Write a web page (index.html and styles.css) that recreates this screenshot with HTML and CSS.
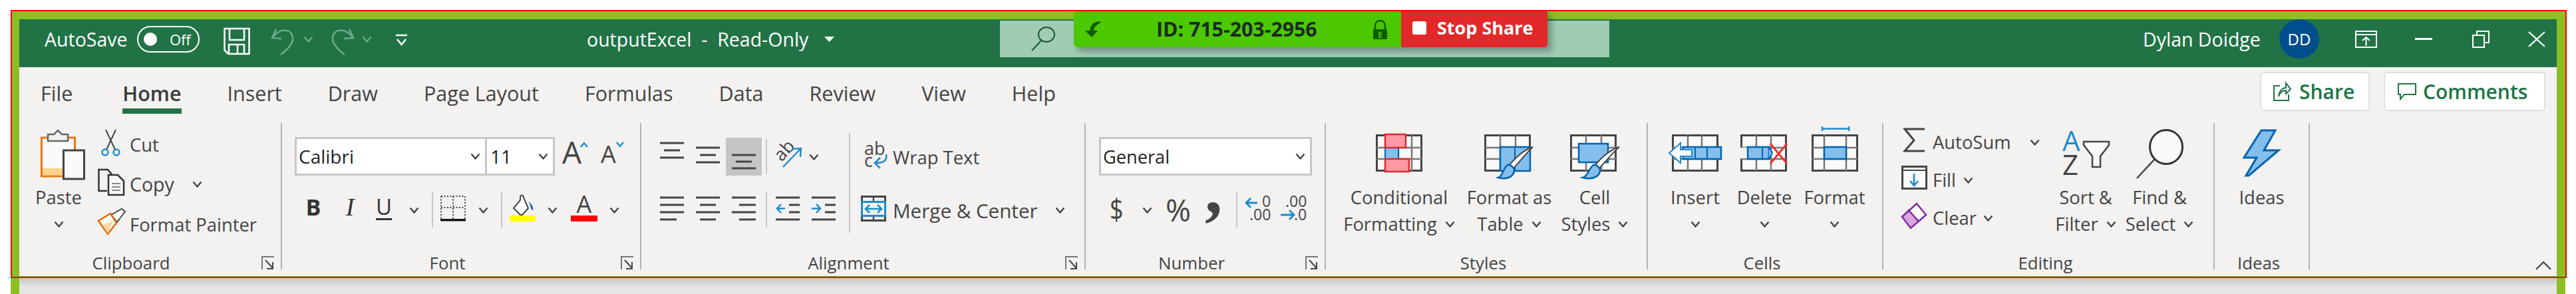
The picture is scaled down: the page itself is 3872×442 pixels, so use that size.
FILE: index.html
```html
<!DOCTYPE html>
<html lang="en">
<head>
<meta charset="utf-8">
<title>outputExcel - Read-Only</title>
<link rel="stylesheet" href="styles.css">
</head>
<body>
<svg class="defs" aria-hidden="true">
  <symbol id="chev" viewBox="0 0 15 10"><polyline points="1.5,1.5 7.5,8.5 13.5,1.5" fill="none" stroke="currentColor" stroke-width="2.4"/></symbol>
  <symbol id="launch" viewBox="0 0 20 20"><path d="M1 20V1H19" fill="none" stroke="#777" stroke-width="2"/><path d="M6 6L17 18M17 9V19H8" fill="none" stroke="#444" stroke-width="2"/></symbol>
</svg>
<div class="frame">
  <div class="meeting">
    <div class="meeting-id">
      <svg class="m-logo" viewBox="0 0 25 25"><path d="M25 2C17 0 9 3 7 15H0L10 25L19 15H13C13 10 17 6 25 2Z" fill="#0f5c00"/></svg>
      <span class="m-text">ID: 715-203-2956</span>
      <svg class="m-lock" viewBox="0 0 23 29"><path d="M4 15V9C4 4 7 1 11.500 1S19 4 19 9V15" fill="none" stroke="#0f5c00" stroke-width="2.500"/><rect x="1" y="14" width="21" height="15" rx="1.500" fill="#0f5c00"/><text x="11.500" y="27" class="m-e">E</text></svg>
    </div>
    <div class="meeting-stop">
      <span class="m-square"></span>
      <span class="m-stop">Stop Share</span>
    </div>
  </div>

  <header class="titlebar">
    <span class="autosave">AutoSave</span>
    <span class="toggle"><span class="knob"></span><span class="off">Off</span></span>
    <svg class="tb save" viewBox="0 0 40 59"><path d="M1.500 14H38.500V52H7L1.500 46.500Z M9 14V31H31V14 M8 52V38H31V52 M21 38V52" fill="none" stroke="#fff" stroke-width="2.500"/></svg>
    <svg class="tb undo" viewBox="0 0 36 59"><path d="M8 15L2 28L16 29M3 27C12 13 34 12 33 31C32 39 20 50 15 53" fill="none" stroke="#6dab8a" stroke-width="2.500"/></svg>
    <svg class="chev dim m13"><use href="#chev"/></svg>
    <svg class="tb redo" viewBox="0 0 37 59"><path d="M29 15L35 28L21 29M34 27C25 13 3 12 4 31C5 39 17 50 22 53" fill="none" stroke="#6dab8a" stroke-width="2.500"/></svg>
    <svg class="chev dim m11"><use href="#chev"/></svg>
    <svg class="tb custom" viewBox="0 0 19 59"><path d="M1 24H18" stroke="#fff" stroke-width="2.500"/><path d="M3 30L9.500 38L16 30" fill="none" stroke="#fff" stroke-width="2.500"/></svg>
    <div class="doc">
      <span class="doc-name">outputExcel  -  Read-Only</span>
      <svg class="doc-arrow" viewBox="0 0 15 8"><path d="M0 0H15L7.500 8Z" fill="#fff"/></svg>
    </div>
    <div class="search">
      <svg class="search-ico" viewBox="0 0 36 36"><ellipse cx="23" cy="12" rx="12" ry="11" fill="none" stroke="#17553a" stroke-width="2"/><path d="M15 21L1 36" stroke="#17553a" stroke-width="2"/></svg>
    </div>
    <span class="user">Dylan Doidge</span>
    <span class="avatar">DD</span>
    <svg class="tb win1" viewBox="0 0 33 26"><rect x="1" y="1" width="31" height="24" fill="none" stroke="#fff" stroke-width="2"/><path d="M1 6H32M16.500 23V10M11 15L16.500 10L22 15" fill="none" stroke="#fff" stroke-width="2"/></svg>
    <span class="win-min"></span>
    <svg class="tb win3" viewBox="0 0 26 26"><rect x="1" y="7" width="17" height="18" fill="none" stroke="#fff" stroke-width="2"/><path d="M7 7V1H25V18H18" fill="none" stroke="#fff" stroke-width="2"/></svg>
    <svg class="tb win4" viewBox="0 0 26 24"><path d="M1 1L25 23M25 1L1 23" stroke="#fff" stroke-width="2.200"/></svg>
  </header>

  <nav class="tabs">
    <span class="tab tab-file">File</span>
    <span class="tab tab-on">Home</span>
    <span class="tab">Insert</span>
    <span class="tab">Draw</span>
    <span class="tab">Page Layout</span>
    <span class="tab">Formulas</span>
    <span class="tab">Data</span>
    <span class="tab">Review</span>
    <span class="tab">View</span>
    <span class="tab">Help</span>
    <div class="actions">
      <span class="action act-share">
        <svg class="act-ico" viewBox="0 0 28 29"><path d="M11 6H2V28H24V19M9 22C10 13 15 9 20 9V2L27 11L20 18V13C15 13 11 16 9 22Z" fill="none" stroke="#217346" stroke-width="2"/></svg>
        <span>Share</span>
      </span>
      <span class="action act-comments">
        <svg class="act-ico" viewBox="0 0 28 25"><path d="M1 1H27V17H10L4 24V17H1Z" fill="none" stroke="#217346" stroke-width="2"/></svg>
        <span>Comments</span>
      </span>
    </div>
  </nav>

  <section class="ribbon">
    <div class="group g-clip">
      <div class="gbody">
        <div class="big b-paste">
          <svg class="bigico w80" viewBox="0 0 80 92">
            <rect x="14.500" y="22" width="50" height="58" fill="#fafafa" stroke="#e8790a" stroke-width="3"/>
            <rect x="16" y="68" width="30" height="10" fill="#fdd58a"/>
            <path d="M24 27V17H33L39 11L45 17H54V27Z" fill="#f3f2f1" stroke="#666" stroke-width="2.500"/>
            <rect x="47.500" y="41" width="31" height="43" fill="#fafafa" stroke="#444" stroke-width="3"/>
          </svg>
          <span class="bline">Paste</span>
          <span class="bline"><svg class="chev"><use href="#chev"/></svg></span>
        </div>
        <div class="smalls">
          <div class="srow">
            <svg class="sico" viewBox="0 0 48 60"><path d="M12 8L26 38M27 8L13 38" stroke="#444" stroke-width="2"/><circle cx="11" cy="42" r="4.500" fill="none" stroke="#1e8bcd" stroke-width="2.500"/><circle cx="28" cy="42" r="4.500" fill="none" stroke="#1e8bcd" stroke-width="2.500"/></svg>
            <span>Cut</span>
          </div>
          <div class="srow">
            <svg class="sico" viewBox="0 0 48 60"><path d="M14 40H1.500V8H15L21 15" fill="none" stroke="#333" stroke-width="2.500"/><path d="M16 16H30L39 25V46H16Z" fill="#fafafa" stroke="#333" stroke-width="2.500"/><path d="M21 29H34M21 34H34M21 39H34" stroke="#888" stroke-width="2"/></svg>
            <span class="copy-text">Copy</span>
            <svg class="chev m27"><use href="#chev"/></svg>
          </div>
          <div class="srow">
            <svg class="sico" viewBox="0 0 48 60"><path d="M20 16L36 7L41 11L29 27Z" fill="#fff" stroke="#444" stroke-width="2"/><path d="M1 25L19 14L28 28L15 45Z" fill="#fff" stroke="#e06c00" stroke-width="2.500"/><path d="M7 31L23 25L15 44Z" fill="#fcd9a8"/></svg>
            <span>Format Painter</span>
          </div>
        </div>
      </div>
      <div class="glabel"><span class="gname">Clipboard</span><svg class="launch l28"><use href="#launch"/></svg></div>
    </div>

    <div class="group g-font">
      <div class="gbody col">
        <div class="fontrow">
          <span class="select s-font"><span>Calibri</span><svg class="chev"><use href="#chev"/></svg></span>
          <span class="select s-size"><span>11</span><svg class="chev"><use href="#chev"/></svg></span>
          <span class="grow">A<svg class="caret" viewBox="0 0 12 9"><path d="M1 8L6 2L11 8" fill="none" stroke="#1e8bcd" stroke-width="2.400"/></svg></span>
          <span class="shrink">A<svg class="caret" viewBox="0 0 12 9"><path d="M1 1L6 7L11 1" fill="none" stroke="#1e8bcd" stroke-width="2.400"/></svg></span>
        </div>
        <div class="tools">
          <span class="fmt fmt-b">B</span>
          <span class="fmt fmt-i">I</span>
          <span class="fmt fmt-u">U</span>
          <svg class="chev m14"><use href="#chev"/></svg>
          <span class="vdiv m19"></span>
          <svg class="tool w38 m11" viewBox="0 0 38 53"><path d="M1 6H37M1 6V40M37 6V40M19 6V40M1 23H37" fill="none" stroke="#444" stroke-width="2" stroke-dasharray="2 2.500"/><rect y="40" width="38" height="3.500" fill="#111"/></svg>
          <svg class="chev m19"><use href="#chev"/></svg>
          <span class="vdiv m19"></span>
          <svg class="tool w39 m11" viewBox="0 0 39 53"><path d="M6 24L16 12V7C17 3 20 4 21 8L28 24L19 34H16Z" fill="#fff" stroke="#444" stroke-width="2"/><path d="M29 14C33 18 36 22 35 27C33 28 32 24 29 14Z" fill="#0f6cbd"/><rect y="35" width="39" height="9" fill="#ffff00"/></svg>
          <svg class="chev m18"><use href="#chev"/></svg>
          <span class="colora m20">A<span class="colorbar"></span></span>
          <svg class="chev m18"><use href="#chev"/></svg>
        </div>
      </div>
      <div class="glabel"><span class="gname">Font</span><svg class="launch l12"><use href="#launch"/></svg></div>
    </div>

    <div class="group g-align">
      <div class="gbody">
        <div class="al-left">
          <div class="al-row1">
            <svg class="tool w36" viewBox="0 0 36 57"><path d="M0 8H36M6 19H30M0 30H36" stroke="#444" stroke-width="2.800"/></svg>
            <svg class="tool w36 m18" viewBox="0 0 36 57"><path d="M0 15H36M6 26H30M0 37H36" stroke="#444" stroke-width="2.800"/></svg>
            <span class="al-sel m9"><svg class="tool w36" viewBox="0 0 36 57"><path d="M0 26H36M6 36H30M0 46H36" stroke="#444" stroke-width="2.800"/></svg></span>
            <span class="vdiv m6"></span>
            <svg class="tool w40 m11" viewBox="0 0 40 57"><text class="ab-rot" transform="translate(11 37) rotate(-48)">ab</text><path d="M13 44L39 17M27 17L40 16L39 29" fill="none" stroke="#1e8bcd" stroke-width="2.500"/></svg>
            <svg class="chev m12"><use href="#chev"/></svg>
          </div>
          <div class="al-row2">
            <svg class="tool w36" viewBox="0 0 36 53"><path d="M0 8H36M0 19H36M0 30H36M0 41H25" stroke="#444" stroke-width="2.800"/></svg>
            <svg class="tool w36 m18" viewBox="0 0 36 53"><path d="M0 8H36M6 19H30M0 30H36M6 41H30" stroke="#444" stroke-width="2.800"/></svg>
            <svg class="tool w36 m18" viewBox="0 0 36 53"><path d="M0 8H36M11 19H36M0 30H36M11 41H36" stroke="#444" stroke-width="2.800"/></svg>
            <span class="vdiv m15"></span>
            <svg class="tool w36 m13" viewBox="0 0 36 53"><path d="M0 8H36M20 19H36M20 30H36M0 41H36" stroke="#444" stroke-width="2.800"/><path d="M14 24.500H2M8 18L2 24.500L8 31" fill="none" stroke="#1e8bcd" stroke-width="2.500"/></svg>
            <svg class="tool w36 m18" viewBox="0 0 36 53"><path d="M0 8H36M20 19H36M20 30H36M0 41H36" stroke="#444" stroke-width="2.800"/><path d="M0 24.500H13M7 18L13 24.500L7 31" fill="none" stroke="#1e8bcd" stroke-width="2.500"/></svg>
          </div>
        </div>
        <span class="bigdiv"></span>
        <div class="al-right">
          <div class="wrow">
            <svg class="wico" viewBox="0 0 48 60"><text class="ab" x="5" y="27">ab</text><text class="ab" x="5" y="45">c</text><path d="M38 26C40 37 32 39 22 39M29 31L21 39L29 47" fill="none" stroke="#1e8bcd" stroke-width="2.500"/></svg>
            <span>Wrap Text</span>
          </div>
          <div class="wrow">
            <svg class="wico" viewBox="0 0 48 60"><rect x="1.500" y="9.500" width="35" height="36" fill="none" stroke="#444" stroke-width="3"/><path d="M19 9V45" stroke="#444" stroke-width="2.500"/><rect x="1.500" y="17.500" width="35" height="21" fill="#f3f2f1" stroke="#1e8bcd" stroke-width="3"/><path d="M8 28H30M13 22L7 28L13 34M25 22L31 28L25 34" fill="none" stroke="#1e8bcd" stroke-width="2.500"/></svg>
            <span class="merge-text">Merge &amp; Center</span>
            <svg class="chev m26"><use href="#chev"/></svg>
          </div>
        </div>
      </div>
      <div class="glabel"><span class="gname">Alignment</span><svg class="launch l14"><use href="#launch"/></svg></div>
    </div>

    <div class="group g-num">
      <div class="gbody col">
        <div class="fontrow">
          <span class="select s-num"><span>General</span><svg class="chev"><use href="#chev"/></svg></span>
        </div>
        <div class="tools">
          <span class="nsym n-dollar">$</span>
          <svg class="chev m30"><use href="#chev"/></svg>
          <span class="nsym n-pct m20">%</span>
          <svg class="tool w20 m26" viewBox="0 0 20 53"><text class="comma" x="-5" y="31">,</text></svg>
          <span class="vdiv m22"></span>
          <svg class="tool w39 m11" viewBox="0 0 39 53"><text class="dec" x="26" y="22">0</text><text class="dec" x="7" y="42">.00</text><path d="M19 16H2M9 9L2 16L9 23" fill="none" stroke="#1e8bcd" stroke-width="2.800"/></svg>
          <svg class="tool w39 m14" viewBox="0 0 39 53"><text class="dec" x="8" y="22">.00</text><text class="dec" x="21" y="42">.0</text><path d="M1 34H21M14 27L21 34L14 41" fill="none" stroke="#1e8bcd" stroke-width="2.800"/></svg>
        </div>
      </div>
      <div class="glabel"><span class="gname">Number</span><svg class="launch l12"><use href="#launch"/></svg></div>
    </div>

    <div class="group g-styles">
      <div class="gbody">
        <div class="big b-cf">
          <svg class="bigico w70" viewBox="0 0 70 92">
            <rect x="1.500" y="18.500" width="67" height="53" fill="#fafafa" stroke="#444" stroke-width="3"/>
            <path d="M1 37H69M1 54H69M34 18V72M54 18V72" stroke="#777" stroke-width="2.500"/>
            <rect x="14" y="37" width="20" height="17" fill="#83beec" stroke="#0063b1" stroke-width="2"/>
            <rect x="14" y="17" width="31" height="20" fill="#ff99a4" stroke="#d92b2b" stroke-width="2.500"/>
            <rect x="14" y="54" width="36" height="19" fill="#ff99a4" stroke="#d92b2b" stroke-width="2.500"/>
          </svg>
          <span class="bline">Conditional</span>
          <span class="bline">Formatting<svg class="chev m12"><use href="#chev"/></svg></span>
        </div>
        <div class="big b-fat">
          <svg class="bigico w75" viewBox="0 0 75 92">
            <rect x="1.500" y="18.500" width="67" height="53" fill="#fafafa" stroke="#444" stroke-width="3"/>
            <path d="M1 37H69M1 54H69M24 18V72M47 18V72" stroke="#777" stroke-width="2.500"/>
            <rect x="24" y="36" width="45" height="36" fill="#83beec" stroke="#0063b1" stroke-width="2.500"/>
            <path d="M46 36V72" stroke="#0063b1" stroke-width="2"/>
            <path d="M73 36C66 42 50 62 42 70L36 66C44 54 60 40 73 36Z" fill="#fff" stroke="#444" stroke-width="2"/>
            <path d="M35 63C40 62 46 68 45 72C44 80 34 86 21 82C28 80 28 68 35 63Z" fill="#83beec" stroke="#0063b1" stroke-width="2.500"/>
          </svg>
          <span class="bline">Format as</span>
          <span class="bline">Table<svg class="chev m12"><use href="#chev"/></svg></span>
        </div>
        <div class="big b-cell">
          <svg class="bigico w75" viewBox="0 0 75 92">
            <rect x="1.500" y="18.500" width="67" height="53" fill="#fafafa" stroke="#444" stroke-width="3"/>
            <path d="M1 37H69M1 54H69M24 18V72M47 18V72" stroke="#777" stroke-width="2.500"/>
            <rect x="13" y="31" width="44" height="28" fill="#83beec" stroke="#0063b1" stroke-width="2.500"/>
            <path d="M74 36C66 42 50 62 42 70L36 66C44 54 60 40 74 36Z" fill="#fff" stroke="#444" stroke-width="2"/>
            <path d="M35 63C40 62 46 68 45 72C44 80 34 86 19 82C27 80 28 68 35 63Z" fill="#83beec" stroke="#0063b1" stroke-width="2.500"/>
          </svg>
          <span class="bline">Cell</span>
          <span class="bline">Styles<svg class="chev m12"><use href="#chev"/></svg></span>
        </div>
      </div>
      <div class="glabel"><span class="gname">Styles</span></div>
    </div>

    <div class="group g-cells">
      <div class="gbody">
        <div class="big b-ins">
          <svg class="bigico w80" viewBox="0 0 80 92">
            <rect x="6.500" y="18.500" width="67" height="53" fill="#fafafa" stroke="#444" stroke-width="3"/>
            <path d="M6 37H74M6 54H74M29 18V72M50 18V72" stroke="#777" stroke-width="2.500"/>
            <rect x="22" y="36" width="57" height="18" fill="#83beec" stroke="#0063b1" stroke-width="2.500"/>
            <path d="M40 36V54M58 36V54" stroke="#0063b1" stroke-width="2"/>
            <path d="M1 45L18 30V40H35V50H18V60Z" fill="#fafafa" stroke="#1e8bcd" stroke-width="2"/>
          </svg>
          <span class="bline">Insert</span>
          <span class="bline"><svg class="chev"><use href="#chev"/></svg></span>
        </div>
        <div class="big b-del">
          <svg class="bigico w72" viewBox="0 0 72 92">
            <rect x="1.500" y="18.500" width="67" height="53" fill="#fafafa" stroke="#444" stroke-width="3"/>
            <path d="M1 37H69M1 54H69M24 18V72M46 18V72" stroke="#777" stroke-width="2.500"/>
            <rect x="0" y="37" width="10" height="16" fill="#f3f2f1"/>
            <rect x="11" y="36" width="32" height="18" fill="#83beec" stroke="#0063b1" stroke-width="2.500"/>
            <path d="M33 36V54M43 36L48 45L43 54" fill="#83beec" stroke="#0063b1" stroke-width="2"/>
            <path d="M45 31L70 61M70 31L45 61" stroke="#e83535" stroke-width="3"/>
          </svg>
          <span class="bline">Delete</span>
          <span class="bline"><svg class="chev"><use href="#chev"/></svg></span>
        </div>
        <div class="big b-form">
          <svg class="bigico w70" viewBox="0 0 70 92">
            <path d="M16 5V12M56 5V12M16 8.500H56" fill="none" stroke="#1e8bcd" stroke-width="2.500"/>
            <rect x="1.500" y="18.500" width="67" height="53" fill="#fafafa" stroke="#444" stroke-width="3"/>
            <path d="M1 37H69M1 54H69M19 18V72M52 18V72" stroke="#777" stroke-width="2.500"/>
            <rect x="19" y="36" width="33" height="18" fill="#83beec" stroke="#0063b1" stroke-width="2.500"/>
          </svg>
          <span class="bline">Format</span>
          <span class="bline"><svg class="chev"><use href="#chev"/></svg></span>
        </div>
      </div>
      <div class="glabel"><span class="gname">Cells</span></div>
    </div>

    <div class="group g-edit">
      <div class="gbody">
        <div class="edit-small">
          <div class="erow">
            <svg class="eico" viewBox="0 0 47 57"><path d="M35 9H5L19 26L5 42H35" fill="none" stroke="#444" stroke-width="3"/></svg>
            <span>AutoSum</span>
            <svg class="chev m28"><use href="#chev"/></svg>
          </div>
          <div class="erow">
            <svg class="eico" viewBox="0 0 47 57"><rect x="1.500" y="8.500" width="36" height="33" fill="#fafafa" stroke="#444" stroke-width="3"/><path d="M1 14H38" stroke="#444" stroke-width="2"/><path d="M19 19V36M13 30L19 37L25 30" fill="none" stroke="#1e8bcd" stroke-width="2.500"/></svg>
            <span>Fill</span>
            <svg class="chev m11"><use href="#chev"/></svg>
          </div>
          <div class="erow">
            <svg class="eico" viewBox="0 0 47 57"><path d="M23 7L37 24L14 44L1 27Z" fill="#fafafa"/><path d="M10 16L26 34L14 44L1 27Z" fill="#d9a6e0"/><path d="M23 7L37 24L14 44L1 27ZM10 16L26 34" fill="none" stroke="#7f2aa0" stroke-width="2.500"/></svg>
            <span>Clear</span>
            <svg class="chev m10"><use href="#chev"/></svg>
          </div>
        </div>
        <div class="big b-sort">
          <svg class="bigico w71" viewBox="0 0 71 92">
            <text class="az az-a" x="0" y="42">A</text>
            <text class="az" x="0" y="78">Z</text>
            <path d="M32 28H70V33L57 50V66H45V50L32 33Z" fill="#fafafa" stroke="#444" stroke-width="2.500"/>
          </svg>
          <span class="bline">Sort &amp;</span>
          <span class="bline">Filter<svg class="chev m12"><use href="#chev"/></svg></span>
        </div>
        <div class="big b-find">
          <svg class="bigico w71" viewBox="0 0 71 92">
            <ellipse cx="45" cy="36" rx="24.500" ry="25.500" fill="#fafafa" stroke="#333" stroke-width="3"/>
            <path d="M27 55L1 83" stroke="#444" stroke-width="2.500"/>
          </svg>
          <span class="bline">Find &amp;</span>
          <span class="bline">Select<svg class="chev m12"><use href="#chev"/></svg></span>
        </div>
      </div>
      <div class="glabel"><span class="gname">Editing</span></div>
    </div>

    <div class="group g-ideas">
      <div class="gbody">
        <div class="big b-ideas">
          <svg class="bigico w55" viewBox="0 0 55 92"><path d="M27 11H48L31 41H53L8 79H4L20 52H1Z" fill="#83beec" stroke="#0063b1" stroke-width="3"/></svg>
          <span class="bline">Ideas</span>
        </div>
      </div>
      <div class="glabel"><span class="gname">Ideas</span></div>
    </div>

    <svg class="collapse" viewBox="0 0 24 12"><path d="M1 12L12 1L23 12" fill="none" stroke="#444" stroke-width="2.200"/></svg>
  </section>
</div>
<div class="below"></div>
</body>
</html>
```

FILE: styles.css
```css
* { box-sizing: border-box; }
html, body { margin: 0; padding: 0; }
body {
  width: 3872px;
  height: 442px;
  overflow: hidden;
  background: #fff;
  padding-top: 15px;
  font-family: "Open Sans", "Noto Sans", sans-serif;
  color: #444;
}
.defs { display: none; }
svg { display: block; flex: none; overflow: visible; }

.frame {
  position: relative;
  width: 3842px;
  height: 403px;
  margin-left: 16px;
  border: 2px solid #f00;
  padding: 12px 13px 0 11px;
  background: #8cbf24;
  z-index: 1;
}
.below {
  width: 3840px;
  height: 25px;
  margin-left: 16px;
  border-left: 13px solid #8cbf24;
  border-right: 13px solid #8cbf24;
  background: linear-gradient(#c8c8c8, #e6e6e6 14px);
}

/* Screen-share overlay */
.meeting {
  position: absolute;
  left: 1596px;
  top: 0;
  display: flex;
  height: 54px;
  z-index: 2;
  box-shadow: 6px 6px 9px rgba(0, 0, 0, .3);
}
.meeting-id {
  width: 492px;
  display: flex;
  align-items: center;
  background: #4cc800;
  border-radius: 6px 0 0 6px;
  padding-left: 17px;
  color: #1b2a2a;
}
.m-logo { width: 25px; height: 25px; margin-top: -2px; }
.m-text { margin-left: 82px; width: 325px; font-size: 30.3px; font-weight: 700; line-height: 40px; white-space: nowrap; }
.m-lock { width: 23px; height: 29px; }
.m-e { font: 700 12px "Open Sans", sans-serif; fill: #4cc800; text-anchor: middle; }
.meeting-stop {
  width: 220px;
  display: flex;
  align-items: center;
  background: #e22828;
  color: #fff;
  padding-left: 17px;
  border-radius: 0 0 4px 0;
}
.m-square { width: 21px; height: 20px; background: #fff; border-radius: 3px; margin-top: -5px; }
.m-stop { margin-left: 16px; font-size: 27px; font-weight: 700; line-height: 36px; margin-top: -4px; white-space: nowrap; }

/* Title bar */
.titlebar {
  height: 72px;
  padding: 0 17px 13px 38px;
  display: flex;
  align-items: center;
  background: #217346;
  color: #fff;
  font-size: 28.5px;
  white-space: nowrap;
}
.autosave { width: 139px; }
.toggle {
  width: 94px;
  height: 40px;
  border: 2px solid #fff;
  border-radius: 20px;
  display: flex;
  align-items: center;
  padding-left: 8px;
}
.knob { width: 20px; height: 20px; border-radius: 50%; background: #fff; }
.off { margin-left: 19px; font-size: 22px; }
.tb { height: 59px; }
.save { width: 40px; margin-left: 36px; }
.undo { width: 36px; margin-left: 31px; }
.redo { width: 37px; margin-left: 25px; }
.custom { width: 19px; margin-left: 35px; }
.doc { width: 372px; margin-left: 269px; display: flex; align-items: center; justify-content: space-between; white-space: pre; }
.doc-arrow { width: 15px; height: 8px; }
.search {
  width: 916px;
  height: 55px;
  margin-left: 249px;
  background: #a0ccb4;
  padding: 9px 0 0 47px;
  align-self: flex-start;
  margin-top: 2px;
}
.search-ico { width: 36px; height: 36px; }
.user { margin-left: auto; width: 205px; }
.avatar {
  width: 60px;
  height: 59px;
  border-radius: 50%;
  background: #004e8c;
  display: flex;
  align-items: center;
  justify-content: center;
  font-size: 24px;
}
.win1 { width: 33px; height: 26px; margin-left: 54px; }
.win-min { width: 26px; height: 3px; background: #fff; margin-left: 57px; }
.win3 { width: 26px; height: 26px; margin-left: 60px; }
.win4 { width: 26px; height: 24px; margin-left: 58px; }

/* Tabs */
.tabs {
  height: 70px;
  display: flex;
  gap: 69px;
  padding: 0 17px 0 32px;
  background: #f3f2f1;
  font-size: 30.5px;
}
.tab { height: 70px; padding-top: 18px; line-height: 42px; white-space: nowrap; }
.tab-file { margin-right: 6px; }
.tab-on { font-weight: 600; color: #3a3a3a; border-bottom: 8px solid #217346; font-size: 30.5px; }
.actions { margin-left: auto; display: flex; gap: 21px; padding-top: 7px; }
.action {
  height: 59px;
  display: flex;
  align-items: center;
  background: #fff;
  border: 2px solid #e1dfdd;
  border-radius: 6px;
  color: #217346;
  font-weight: 600;
  font-size: 30px;
}
.act-share { width: 165px; padding-left: 17px; gap: 12px; }
.act-comments { width: 243px; padding-left: 19px; gap: 10px; }
.act-ico { width: 28px; height: 29px; }
.act-comments .act-ico { height: 25px; }

/* Ribbon */
.ribbon {
  height: 244px;
  padding-top: 14px;
  display: flex;
  align-items: flex-start;
  background: #f3f2f1;
  font-size: 27.4px;
  white-space: nowrap;
}
.group {
  height: 220px;
  display: flex;
  flex-direction: column;
  border-right: 2px solid #b5b3b1;
}
.g-clip { width: 395px; }
.g-font { width: 540px; }
.g-align { width: 668px; }
.g-num { width: 361px; }
.g-styles { width: 484px; }
.g-cells { width: 354px; }
.g-edit { width: 498px; }
.g-ideas { width: 143px; }
.gbody { flex: 1; min-height: 0; display: flex; }
.col { flex-direction: column; }
.glabel {
  height: 30px;
  margin-bottom: -5px;
  display: flex;
  align-items: center;
  font-size: 25.8px;
  padding-right: 9px;
}
.gname { flex: 1; text-align: center; line-height: 30px; }
.launch { width: 20px; height: 20px; }
.l28 { margin-left: 28px; }
.l12 { margin-left: 12px; }
.l14 { margin-left: 14px; }

.big { display: flex; flex-direction: column; align-items: center; }
.bigico { height: 92px; }
.bline { height: 40px; display: flex; align-items: center; line-height: 40px; }
.w80 { width: 80px; }
.w75 { width: 75px; }
.w72 { width: 72px; }
.w71 { width: 71px; }
.w70 { width: 70px; }
.w55 { width: 55px; }
.w40 { width: 40px; }
.w39 { width: 39px; }
.w38 { width: 38px; }
.w36 { width: 36px; }
.w20 { width: 20px; }

.chev { width: 15px; height: 10px; color: #444; }
.chev.dim { color: #6dab8a; }
.m6 { margin-left: 6px; }
.m9 { margin-left: 9px; }
.m10 { margin-left: 10px; }
.m11 { margin-left: 11px; }
.m12 { margin-left: 12px; }
.m13 { margin-left: 13px; }
.m14 { margin-left: 14px; }
.m15 { margin-left: 15px; }
.m18 { margin-left: 18px; }
.m19 { margin-left: 19px; }
.m20 { margin-left: 20px; }
.m22 { margin-left: 22px; }
.m26 { margin-left: 26px; }
.m27 { margin-left: 27px; }
.m28 { margin-left: 28px; }
.m30 { margin-left: 30px; }

/* Clipboard */
.b-paste { width: 118px; }
.smalls { padding-top: 2px; }
.srow { height: 60px; display: flex; align-items: center; }
.sico { width: 48px; height: 60px; }
.copy-text { font-size: 28.5px; }

/* Font */
.g-font .gbody { padding-left: 19px; }
.fontrow { margin-top: 21px; height: 58px; display: flex; align-items: flex-start; }
.select {
  height: 58px;
  display: flex;
  align-items: center;
  justify-content: space-between;
  background: #fff;
  border: 3px solid #c6c6c6;
  padding: 0 7px 0 3px;
  color: #222;
  font-size: 28px;
}
.s-font { width: 289px; }
.s-size { width: 105px; margin-left: -3px; padding-left: 5px; }
.s-num { width: 320px; font-size: 27.2px; }
.grow, .shrink { display: flex; line-height: 1; }
.grow { font-size: 46px; margin: -1px 0 0 11px; width: 58px; }
.shrink { font-size: 36px; margin-top: 8px; }
.caret { width: 12px; height: 9px; }
.grow .caret { margin-top: 8px; margin-left: -2px; }
.shrink .caret { margin-top: -1px; }
.tools { margin-top: 25px; height: 53px; display: flex; align-items: center; }
.tool { height: 53px; }
.fmt { height: 53px; text-align: center; line-height: 44px; font-size: 34px; color: #333; }
.fmt-b { width: 56px; font-weight: 700; }
.fmt-i { width: 54px; font-family: "Liberation Serif", serif; font-style: italic; font-size: 38px; }
.fmt-u { width: 48px; font-size: 33px; text-decoration: underline; text-decoration-thickness: 3px; text-underline-offset: 5px; }
.vdiv { width: 2px; height: 53px; background: #c8c6c4; }
.colora { width: 40px; height: 53px; display: flex; flex-direction: column; align-items: center; font-size: 36px; line-height: 36px; }
.colorbar { width: 40px; height: 9px; background: #f00; margin-top: -1px; }

/* Alignment */
.g-align .gbody { padding-left: 28px; }
.al-left { width: 284px; padding-top: 22px; }
.al-row1 { height: 57px; display: flex; align-items: center; }
.al-row1 .tool { height: 57px; }
.al-row2 { margin-top: 25px; height: 53px; display: flex; align-items: center; }
.al-sel { width: 54px; height: 57px; background: #c6c5c4; display: flex; justify-content: center; }
.bigdiv { width: 2px; height: 150px; margin-top: 15px; background: #c8c6c4; }
.al-right { margin-left: 16px; padding-top: 21px; }
.wrow { height: 60px; margin-bottom: 20px; display: flex; align-items: center; }
.wico { width: 48px; height: 60px; }
.merge-text { font-size: 29.6px; }
.ab { font: 27px "Open Sans", sans-serif; fill: #444; }
.ab-rot { font: 27px "Open Sans", sans-serif; fill: #444; }

/* Number */
.g-num .gbody { padding-left: 20px; }
.nsym { height: 53px; line-height: 52px; text-align: center; }
.n-dollar { width: 19px; margin-left: 16px; font-size: 36px; transform: scaleY(1.2); }
.n-pct { width: 38px; font-size: 46px; }
.comma { font: 700 105px "Liberation Serif", serif; fill: #444; }
.dec { font: 23px "Open Sans", sans-serif; fill: #444; }

/* Styles */
.g-styles .gbody { padding-left: 21px; }
.b-cf { width: 178px; }
.b-fat { width: 153px; }
.b-cell { width: 104px; }

/* Cells */
.g-cells .gbody { padding-left: 21px; }
.b-ins { width: 100px; }
.b-del { width: 108px; }
.b-form { width: 103px; }

/* Editing */
.g-edit .gbody { padding-left: 27px; }
.edit-small { width: 222px; }
.erow { height: 57px; display: flex; align-items: center; }
.eico { width: 47px; height: 57px; }
.b-sort { width: 110px; }
.b-find { width: 112px; }
.az { font: 42px "Open Sans", sans-serif; fill: #444; }
.az-a { fill: #1e8bcd; }

/* Ideas */
.b-ideas { width: 141px; }

.collapse { width: 24px; height: 12px; margin-left: auto; margin-right: 8px; align-self: flex-end; margin-bottom: 10px; }
```
